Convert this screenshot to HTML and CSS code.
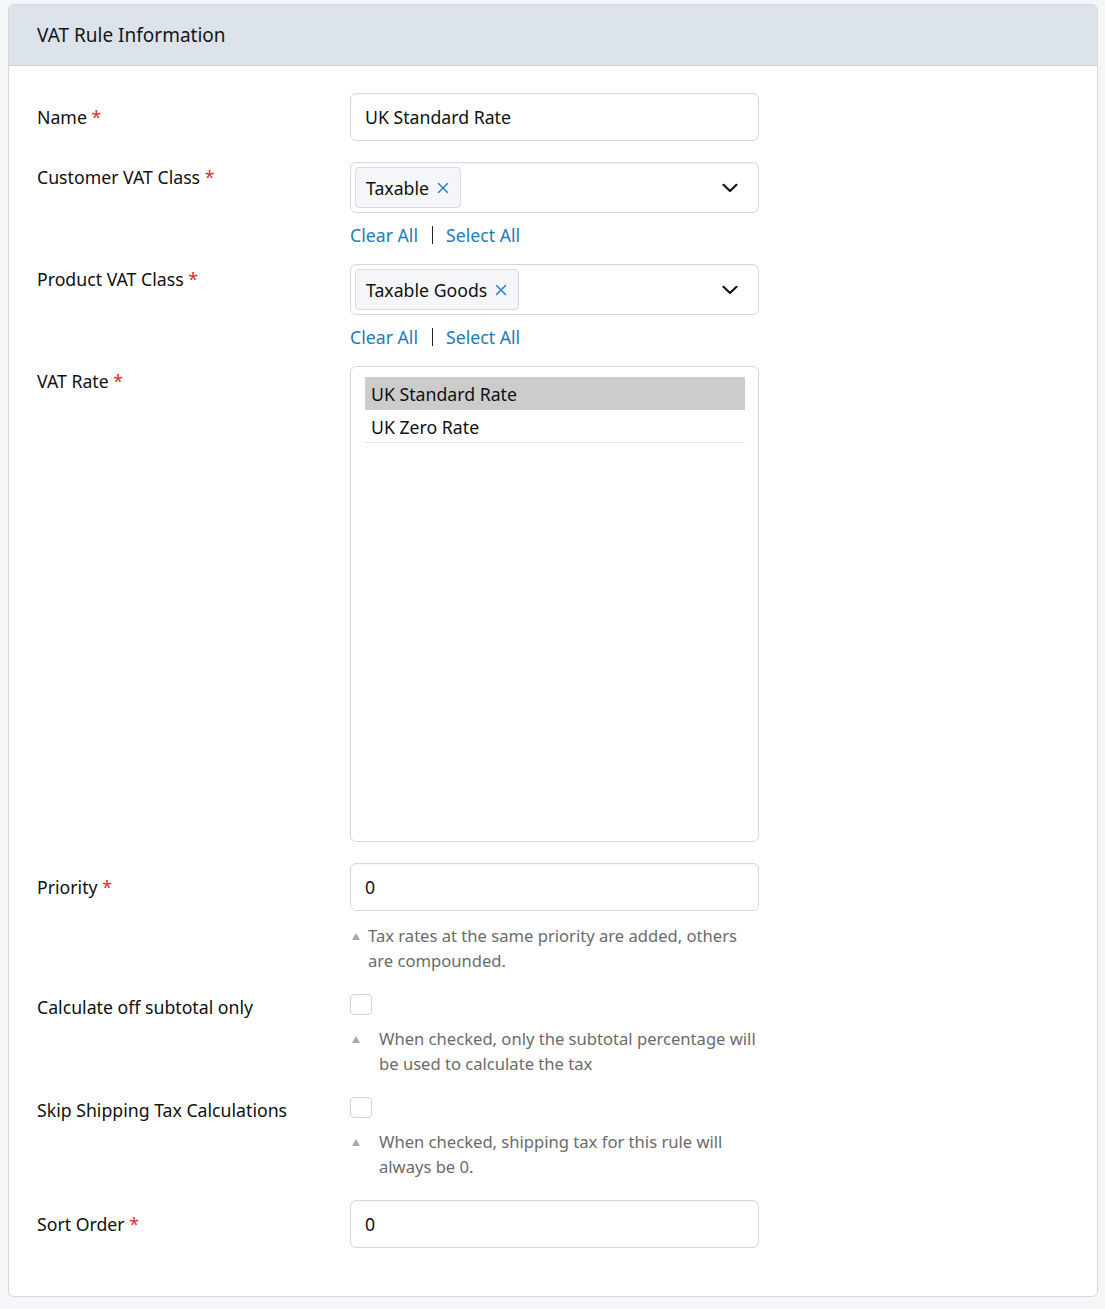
FILE: index.html
```html
<!DOCTYPE html>
<html lang="en">
<head>
<meta charset="utf-8">
<title>VAT Rule Information</title>
<link rel="stylesheet" href="styles.css">
</head>
<body>
<div class="page">
  <section class="card">
    <header class="card-head">VAT Rule Information</header>
    <div class="card-body">
      <div class="row">
        <div class="label">Name <span class="req">*</span></div>
        <div class="control">
          <div class="input">UK Standard Rate</div>
        </div>
      </div>

      <div class="row row--links">
        <div class="label label--top">Customer VAT Class <span class="req">*</span></div>
        <div class="control">
          <div class="multi">
            <span class="tag">Taxable <svg class="tag-x" viewBox="0 0 12 12" width="12" height="12"><path d="M1.5 1.5 L10.5 10.5 M10.5 1.5 L1.5 10.5" /></svg></span>
            <svg class="chev" viewBox="0 0 16 10" width="16" height="10"><path d="M1.5 1.8 L8 8 L14.5 1.8" /></svg>
          </div>
          <div class="links"><a class="link">Clear All</a><span class="sep"></span><a class="link">Select All</a></div>
        </div>
      </div>

      <div class="row row--links">
        <div class="label label--top">Product VAT Class <span class="req">*</span></div>
        <div class="control">
          <div class="multi">
            <span class="tag">Taxable Goods <svg class="tag-x" viewBox="0 0 12 12" width="12" height="12"><path d="M1.5 1.5 L10.5 10.5 M10.5 1.5 L1.5 10.5" /></svg></span>
            <svg class="chev" viewBox="0 0 16 10" width="16" height="10"><path d="M1.5 1.8 L8 8 L14.5 1.8" /></svg>
          </div>
          <div class="links"><a class="link">Clear All</a><span class="sep"></span><a class="link">Select All</a></div>
        </div>
      </div>

      <div class="row">
        <div class="label label--top">VAT Rate <span class="req">*</span></div>
        <div class="control">
          <div class="listbox">
            <div class="option option--selected">UK Standard Rate</div>
            <div class="option">UK Zero Rate</div>
          </div>
        </div>
      </div>

      <div class="row">
        <div class="label">Priority <span class="req">*</span></div>
        <div class="control">
          <div class="input">0</div>
          <div class="hint">
            <span class="hint-icon"><svg viewBox="0 0 8 7" width="8" height="7"><polygon points="4,0 8,7 0,7" /></svg></span>
            <span class="hint-text">Tax rates at the same priority are added, others are compounded.</span>
          </div>
        </div>
      </div>

      <div class="row">
        <div class="label label--flush">Calculate off subtotal only</div>
        <div class="control">
          <span class="checkbox"></span>
          <div class="hint hint--wide">
            <span class="hint-icon"><svg viewBox="0 0 8 7" width="8" height="7"><polygon points="4,0 8,7 0,7" /></svg></span>
            <span class="hint-text">When checked, only the subtotal percentage will be used to calculate the tax</span>
          </div>
        </div>
      </div>

      <div class="row">
        <div class="label label--flush">Skip Shipping Tax Calculations</div>
        <div class="control">
          <span class="checkbox"></span>
          <div class="hint hint--wide">
            <span class="hint-icon"><svg viewBox="0 0 8 7" width="8" height="7"><polygon points="4,0 8,7 0,7" /></svg></span>
            <span class="hint-text">When checked, shipping tax for this rule will always be 0.</span>
          </div>
        </div>
      </div>

      <div class="row">
        <div class="label">Sort Order <span class="req">*</span></div>
        <div class="control">
          <div class="input">0</div>
        </div>
      </div>
    </div>
  </section>
</div>
</body>
</html>
```

FILE: styles.css
```css
* { box-sizing: border-box; }

html, body {
  margin: 0;
  padding: 0;
  background: #f5f6f8;
}

body {
  font-family: "Noto Sans", "Open Sans", sans-serif;
  font-size: 17.7px;
  color: #111;
}

.page {
  padding: 4px 7px 11px 8px;
}

.card {
  background: #fff;
  border: 1px solid #d3d8e3;
  border-radius: 6px;
  overflow: hidden;
}

.card-head {
  background: #dde3ea;
  border-bottom: 1px solid #cdd3de;
  height: 61px;
  padding: 0 28px;
  display: flex;
  align-items: center;
  font-size: 19px;
  color: #161616;
}

.card-body {
  padding: 27px 28px 48px;
  display: flex;
  flex-direction: column;
  gap: 21px;
}

.row {
  display: grid;
  grid-template-columns: 313px 409px;
}

.label {
  line-height: 25px;
  padding-top: 12px;
}

.label--top { padding-top: 3px; }
.label--flush { padding-top: 1px; }

.req {
  color: #e02b27;
}

.control {
  display: flex;
  flex-direction: column;
  align-items: flex-start;
}

.input {
  width: 409px;
  height: 48px;
  border: 1px solid #d3d7e5;
  border-radius: 6px;
  padding: 0 14px;
  display: flex;
  align-items: center;
  background: #fff;
  box-shadow: inset 0 1px 2px rgba(0, 0, 0, 0.04);
}

.multi {
  width: 409px;
  height: 51px;
  border: 1px solid #d3d7e5;
  border-radius: 6px;
  padding: 4px 20px 4px 4px;
  display: flex;
  align-items: center;
  justify-content: space-between;
  box-shadow: inset 0 1px 2px rgba(0, 0, 0, 0.04);
}

.tag {
  height: 41px;
  display: inline-flex;
  align-items: center;
  gap: 8px;
  padding: 0 11px 0 10px;
  background: #f5f6f9;
  border: 1px solid #d5d9e4;
  border-radius: 4px;
}

.tag-x {
  fill: none;
  stroke: #2b86c2;
  stroke-width: 1.6;
  stroke-linecap: round;
}

.chev {
  fill: none;
  stroke: #111;
  stroke-width: 2.2;
  stroke-linecap: round;
  stroke-linejoin: round;
}

.links {
  display: flex;
  align-items: center;
  padding-top: 10px;
  line-height: 24px;
  margin-bottom: -4px;
}

.link {
  color: #1f7bb7;
  text-decoration: none;
}

.sep {
  display: inline-block;
  width: 1px;
  height: 18px;
  background: #222;
  margin: 0 13px 0 14px;
}

.listbox {
  width: 409px;
  height: 476px;
  border: 1px solid #d3d7e5;
  border-radius: 6px;
  padding: 10px 13px 10px 14px;
}

.option {
  height: 33px;
  padding: 1px 6px 0;
  display: flex;
  align-items: center;
  border-bottom: 1px solid #e2e2e2;
}

.option--selected {
  background: #cccccc;
  border-bottom-color: #cccccc;
}

.hint {
  display: flex;
  align-items: flex-start;
  margin-top: 12px;
  font-size: 16.6px;
  line-height: 25px;
  color: #6b6b6b;
}

.hint-icon {
  flex: 0 0 18px;
  padding-left: 2px;
  padding-top: 10px;
  line-height: 0;
}

.hint-icon svg { fill: #a6a9ad; }

.hint--wide .hint-icon { flex-basis: 29px; }

.hint-text { flex: 1; }

.checkbox {
  display: block;
  width: 22px;
  height: 21px;
  border: 1px solid #cfd2e2;
  border-radius: 4px;
  background: #fff;
}

.checkbox + .hint { margin-top: 11px; }
```
